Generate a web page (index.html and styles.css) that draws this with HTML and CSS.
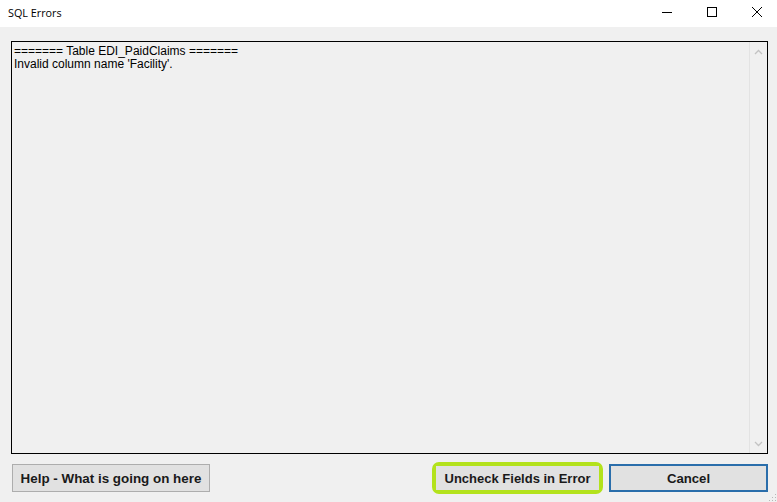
FILE: index.html
```html
<!DOCTYPE html>
<html>
<head>
<meta charset="utf-8">
<link rel="stylesheet" href="styles.css">
</head>
<body>
<div class="window">
  <div class="titlebar">
    <span class="title">SQL Errors</span>
    <div class="controls">
      <span class="ctl"><svg width="12" height="12" viewBox="0 0 12 12"><path d="M1 6.5h10" stroke="#000" stroke-width="1"/></svg></span>
      <span class="ctl"><svg width="12" height="12" viewBox="0 0 12 12"><rect x="1.5" y="1.5" width="9" height="9" fill="none" stroke="#000" stroke-width="1"/></svg></span>
      <span class="ctl"><svg width="12" height="12" viewBox="0 0 12 12"><path d="M1 1L11 11M11 1L1 11" stroke="#000" stroke-width="1"/></svg></span>
    </div>
  </div>
  <div class="content">
    <div class="textbox">
      <div class="text">
        <div>======= Table EDI_PaidClaims =======</div>
        <div>Invalid column name 'Facility'.</div>
      </div>
      <div class="scrollbar">
        <svg class="arrow" width="9" height="6" viewBox="0 0 9 6"><path d="M1 5L4.5 1.5L8 5" fill="none" stroke="#c3c3c3" stroke-width="1.3"/></svg>
        <svg class="arrow" width="9" height="6" viewBox="0 0 9 6"><path d="M1 1L4.5 4.5L8 1" fill="none" stroke="#c3c3c3" stroke-width="1.3"/></svg>
      </div>
    </div>
    <div class="footer">
      <button class="btn help">Help - What is going on here</button>
      <div class="right">
        <div class="highlight"><button class="btn uncheck">Uncheck Fields in Error</button></div>
        <button class="btn cancel">Cancel</button>
      </div>
    </div>
  </div>
  <div class="grip"></div>
</div>
</body>
</html>
```
FILE: styles.css
```css
* { box-sizing: border-box; }
html, body { margin: 0; padding: 0; }
body {
  width: 777px;
  height: 502px;
  background: #f0f0f0;
  overflow: hidden;
  font-family: "Liberation Sans", Arial, sans-serif;
}
.window {
  position: relative;
  width: 777px;
  height: 502px;
  display: flex;
  flex-direction: column;
}
.titlebar {
  height: 27px;
  background: #ffffff;
  display: flex;
  align-items: center;
  justify-content: space-between;
}
.title {
  font-family: "Open Sans", "Noto Sans", sans-serif;
  font-size: 10.8px;
  color: #000;
  padding-left: 8px;
  padding-bottom: 2px;
}
.controls {
  display: flex;
  height: 27px;
  margin-right: -2px;
}
.ctl {
  width: 45px;
  display: flex;
  align-items: center;
  justify-content: center;
  padding-bottom: 3px;
}
.content {
  flex: 1;
  display: flex;
  flex-direction: column;
  padding: 14px 9px 0 11px;
}
.textbox {
  height: 413px;
  border: 1px solid #000;
  background: #f0f0f0;
  display: flex;
}
.text {
  flex: 1;
  padding: 3px 0 0 2px;
  font-size: 12px;
  line-height: 13px;
  color: #000;
}
.scrollbar {
  width: 18px;
  border-left: 1px solid #e3e3e3;
  background: #f0f0f0;
  display: flex;
  flex-direction: column;
  justify-content: space-between;
  align-items: center;
  padding: 7px 0 6px;
}
.footer {
  display: flex;
  justify-content: space-between;
  align-items: center;
  margin-top: 8px;
  padding-left: 1px;
}
.right {
  display: flex;
  align-items: center;
  gap: 6px;
}
.btn {
  font-family: "Liberation Sans", Arial, sans-serif;
  font-weight: bold;
  font-size: 13.2px;
  color: #1a1a1a;
  background: #e1e1e1;
  border: 1px solid #adadad;
  height: 28px;
  padding: 0;
  margin: 0;
}
.help {
  width: 198px;
  font-size: 13.4px;
}
.highlight {
  border: 4px solid #b3e21c;
  border-radius: 7px;
  padding: 0;
  height: 32px;
  display: flex;
  align-items: center;
  background: #e1e1e1;
}
.uncheck {
  width: 163px;
  height: 24px;
  border: none;
  background: #e1e1e1;
  font-size: 13px;
}
.cancel {
  width: 159px;
  border: 2px solid #2a6eab;
}
.grip {
  position: absolute;
  right: 1px;
  bottom: 1px;
  width: 8px;
  height: 8px;
  background-image: radial-gradient(circle, #b8b8b8 0.8px, transparent 1px);
  background-size: 3px 3px;
  clip-path: polygon(100% 0, 100% 100%, 0 100%);
}
```
